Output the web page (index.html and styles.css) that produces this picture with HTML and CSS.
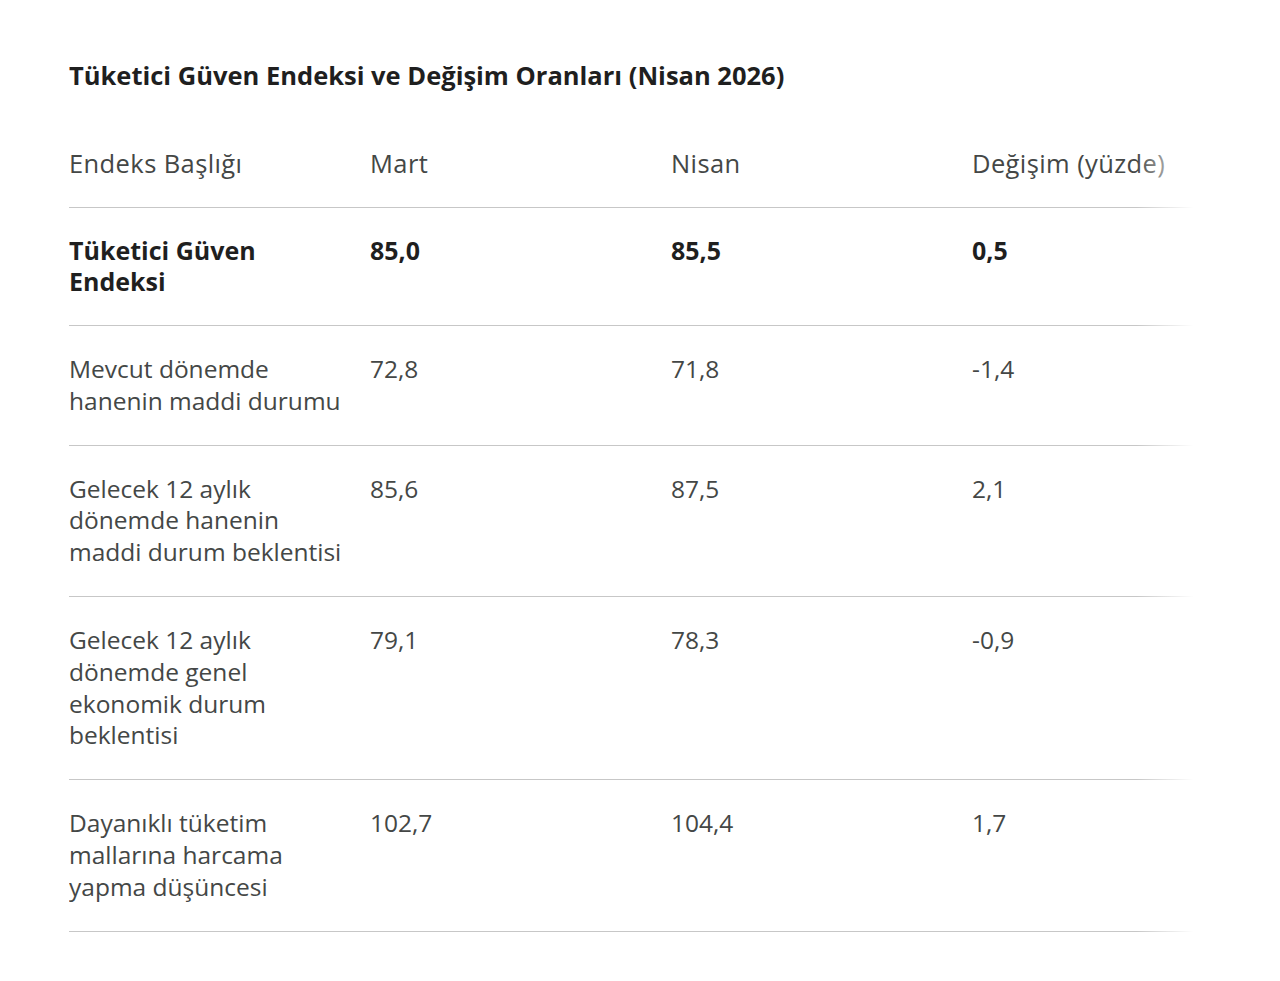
FILE: index.html
```html
<!DOCTYPE html>
<html lang="tr">
<head>
<meta charset="utf-8">
<title>Tüketici Güven Endeksi</title>
<link rel="stylesheet" href="styles.css">
</head>
<body>
<main class="page">
  <h1 class="title">Tüketici Güven Endeksi ve Değişim Oranları (Nisan 2026)</h1>
  <div class="table-wrap">
    <table class="data">
      <thead>
        <tr><th>Endeks Başlığı</th><th>Mart</th><th>Nisan</th><th>Değişim (yüzde)</th></tr>
      </thead>
      <tbody>
        <tr class="strong"><td>Tüketici Güven<br>Endeksi</td><td>85,0</td><td>85,5</td><td>0,5</td></tr>
        <tr><td>Mevcut dönemde<br>hanenin maddi durumu</td><td>72,8</td><td>71,8</td><td>-1,4</td></tr>
        <tr><td>Gelecek 12 aylık<br>dönemde hanenin<br>maddi durum beklentisi</td><td>85,6</td><td>87,5</td><td>2,1</td></tr>
        <tr><td>Gelecek 12 aylık<br>dönemde genel<br>ekonomik durum<br>beklentisi</td><td>79,1</td><td>78,3</td><td>-0,9</td></tr>
        <tr><td>Dayanıklı tüketim<br>mallarına harcama<br>yapma düşüncesi</td><td>102,7</td><td>104,4</td><td>1,7</td></tr>
      </tbody>
    </table>
  </div>
</main>
</body>
</html>
```

FILE: styles.css
```css
html, body {
  margin: 0;
  padding: 0;
  background: #ffffff;
}
body {
  font-family: "Open Sans", Roboto, "Liberation Sans", sans-serif;
  color: #444746;
}
.page {
  padding: 59px 0 0 69px;
}
.title {
  margin: 0 0 28px 0;
  font-size: 25.5px;
  line-height: 32px;
  font-weight: 700;
  color: #1f1f1f;
}
.table-wrap {
  position: relative;
  width: 1131px;
  overflow: hidden;
}
.table-wrap::after {
  content: "";
  position: absolute;
  top: 0;
  right: 0;
  width: 64px;
  height: 100%;
  background: linear-gradient(to right, rgba(255,255,255,0), #ffffff 90%);
  pointer-events: none;
}
.data {
  border-collapse: collapse;
  table-layout: fixed;
  width: 1204px;
}
.data th, .data td {
  width: 301px;
  box-sizing: border-box;
  padding: 27px 0 28px 0;
  text-align: left;
  vertical-align: top;
  white-space: nowrap;
  font-size: 24.5px;
  line-height: 31.8px;
  font-weight: 400;
  border-bottom: 1px solid #c7c7c7;
}
.data th {
  padding-top: 28px;
  font-size: 25.5px;
  line-height: 32px;
  letter-spacing: 0.4px;
  font-weight: 500;
  color: #444746;
}
.data tr.strong td {
  line-height: 31px;
  font-size: 25px;
  font-weight: 700;
  color: #1f1f1f;
}
```
